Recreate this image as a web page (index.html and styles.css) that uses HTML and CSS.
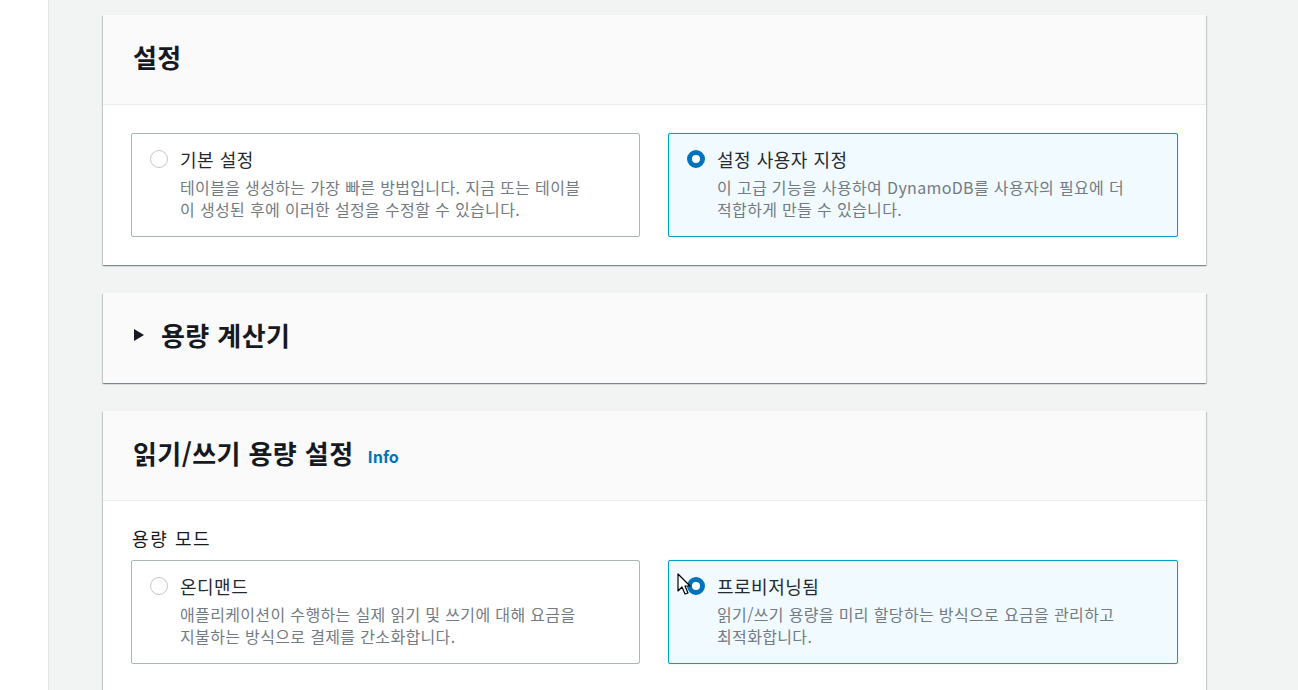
FILE: index.html
```html
<!DOCTYPE html>
<html lang="ko">
<head>
<meta charset="utf-8">
<title>DynamoDB 테이블 설정</title>
<link rel="stylesheet" href="styles.css">
</head>
<body>
<div class="page">
  <aside class="side"></aside>
  <main class="main">
    <section class="card">
      <header class="card-head"><h2 class="title">설정</h2></header>
      <div class="card-body">
        <div class="tiles">
          <label class="tile">
            <span class="radio"></span>
            <span class="tile-text">
              <span class="tile-label">기본 설정</span>
              <span class="tile-desc">테이블을 생성하는 가장 빠른 방법입니다. 지금 또는 테이블<br>이 생성된 후에 이러한 설정을 수정할 수 있습니다.</span>
            </span>
          </label>
          <label class="tile selected">
            <span class="radio checked"></span>
            <span class="tile-text">
              <span class="tile-label">설정 사용자 지정</span>
              <span class="tile-desc">이 고급 기능을 사용하여 DynamoDB를 사용자의 필요에 더<br>적합하게 만들 수 있습니다.</span>
            </span>
          </label>
        </div>
      </div>
    </section>

    <section class="card">
      <header class="card-head plain">
        <h2 class="title"><span class="caret"></span>용량 계산기</h2>
      </header>
    </section>

    <section class="card">
      <header class="card-head"><h2 class="title">읽기/쓰기 용량 설정 <a class="info">Info</a></h2></header>
      <div class="card-body">
        <div class="field-label">용량 모드</div>
        <div class="tiles">
          <label class="tile">
            <span class="radio"></span>
            <span class="tile-text">
              <span class="tile-label">온디맨드</span>
              <span class="tile-desc">애플리케이션이 수행하는 실제 읽기 및 쓰기에 대해 요금을<br>지불하는 방식으로 결제를 간소화합니다.</span>
            </span>
          </label>
          <label class="tile selected">
            <span class="radio checked"></span>
            <span class="tile-text">
              <span class="tile-label">프로비저닝됨</span>
              <span class="tile-desc">읽기/쓰기 용량을 미리 할당하는 방식으로 요금을 관리하고<br>최적화합니다.</span>
            </span>
            <svg class="cursor" width="14" height="24" viewBox="0 0 14 24"><path d="M1 1 L1 18 L5 14 L8 21 L11 20 L8 13 L13 13 Z" fill="#fff" stroke="#000" stroke-width="1.2" stroke-linejoin="round"/></svg>
          </label>
        </div>
      </div>
    </section>
  </main>
</div>
</body>
</html>
```

FILE: styles.css
```css
* { box-sizing: border-box; }
html, body { margin: 0; padding: 0; }
body {
  font-family: "Noto Sans CJK KR", "Noto Sans", "Liberation Sans", sans-serif;
  color: #16191f;
  background: #f2f3f3;
  height: 690px;
  overflow: hidden;
}
.page { display: flex; height: 690px; }
.side {
  width: 49px;
  flex: none;
  background: #fff;
  border-right: 1px solid #e3e6e6;
}
.main {
  flex: none;
  width: 1157px;
  padding: 15px 0 0 54px;
  display: flex;
  flex-direction: column;
  gap: 28px;
}
.card {
  background: #fff;
  box-shadow: 0 1px 1px 0 rgba(0,28,36,.3), 1px 1px 1px 0 rgba(0,28,36,.15), -1px 1px 1px 0 rgba(0,28,36,.15);
}
.card-head {
  background: #fafafa;
  border-bottom: 1px solid #eaeded;
  height: 90px;
  padding: 0 30px 6px;
  display: flex;
  align-items: center;
}
.card-head.plain { border-bottom: none; height: 90px; padding-bottom: 6px; }
.title {
  margin: 0;
  font-size: 26px;
  font-weight: 700;
  line-height: 30px;
  display: flex;
  align-items: center;
  letter-spacing: 0.4px;
}
.caret {
  width: 0; height: 0;
  border-top: 6px solid transparent;
  border-bottom: 6px solid transparent;
  border-left: 10px solid #16191f;
  margin-right: 17px;
  margin-left: 1px;
}
.info {
  font-size: 16px;
  font-weight: 700;
  color: #0073bb;
  margin-left: 14px;
  padding-top: 6px;
  letter-spacing: 0;
}
.card-body { padding: 28px; }
.field-label {
  font-size: 18px;
  line-height: 22px;
  letter-spacing: 1.6px;
  margin: -2px 0 11px 1px;
}
.tiles {
  display: grid;
  grid-template-columns: 509px 510px;
  gap: 28px;
}
.tile {
  position: relative;
  height: 104px;
  border: 1px solid #aab7b8;
  border-radius: 2px;
  background: #fff;
  display: flex;
  align-items: flex-start;
  padding: 15px 10px 0 18px;
}
.tile.selected {
  background: #f1faff;
  border-color: #00a1c9;
  box-shadow: 0 0 1px 0 rgba(0,161,201,.5);
}
.radio {
  width: 18px; height: 18px;
  flex: none;
  border: 1.5px solid #c2cacb;
  border-radius: 50%;
  background: #fff;
  margin-top: 1px;
  margin-right: 12px;
}
.radio.checked {
  border: 5px solid #0073bb;
  background: #fff;
}
.tile-text { display: flex; flex-direction: column; }
.tile-label {
  font-size: 18px;
  line-height: 20px;
  letter-spacing: 0.5px;
  color: #232a31;
}
.tile-desc {
  font-size: 16px;
  line-height: 22px;
  letter-spacing: 0.35px;
  color: #737b83;
  margin-top: 7px;
  white-space: nowrap;
}
.cursor {
  position: absolute;
  left: 8px;
  top: 12px;
}
```
